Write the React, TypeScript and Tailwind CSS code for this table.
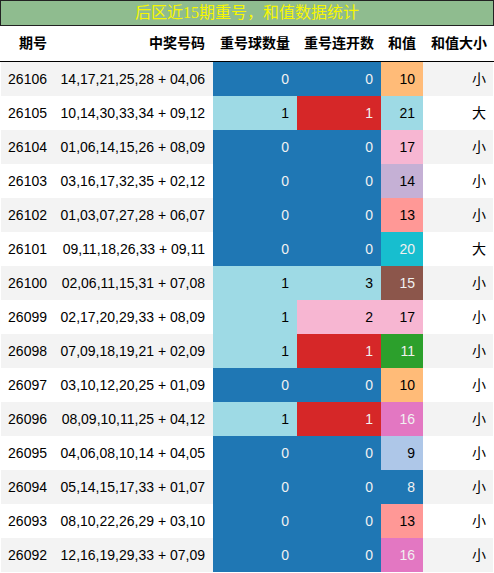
const rows: [string, string, number, number, number, string][] = [
  ['26106', '14,17,21,25,28 + 04,06', 0, 0, 10, '小'],
  ['26105', '10,14,30,33,34 + 09,12', 1, 1, 21, '大'],
  ['26104', '01,06,14,15,26 + 08,09', 0, 0, 17, '小'],
  ['26103', '03,16,17,32,35 + 02,12', 0, 0, 14, '小'],
  ['26102', '01,03,07,27,28 + 06,07', 0, 0, 13, '小'],
  ['26101', '09,11,18,26,33 + 09,11', 0, 0, 20, '大'],
  ['26100', '02,06,11,15,31 + 07,08', 1, 3, 15, '小'],
  ['26099', '02,17,20,29,33 + 08,09', 1, 2, 17, '小'],
  ['26098', '07,09,18,19,21 + 02,09', 1, 1, 11, '小'],
  ['26097', '03,10,12,20,25 + 01,09', 0, 0, 10, '小'],
  ['26096', '08,09,10,11,25 + 04,12', 1, 1, 16, '小'],
  ['26095', '04,06,08,10,14 + 04,05', 0, 0, 9, '小'],
  ['26094', '05,14,15,17,33 + 01,07', 0, 0, 8, '小'],
  ['26093', '08,10,22,26,29 + 03,10', 0, 0, 13, '小'],
  ['26092', '12,16,19,29,33 + 07,09', 0, 0, 16, '小'],
];

const cellColor: Record<number, string> = {
  0: 'bg-[#1f77b4] text-[#f1f1f1]',
  1: 'bg-[#9edae5] text-black',
  2: 'bg-[#f7b6d2] text-black',
  3: 'bg-[#9edae5] text-black',
  8: 'bg-[#1f77b4] text-[#f1f1f1]',
  9: 'bg-[#aec7e8] text-black',
  10: 'bg-[#ffbb78] text-black',
  11: 'bg-[#2ca02c] text-[#f1f1f1]',
  13: 'bg-[#ff9896] text-black',
  14: 'bg-[#c5b0d5] text-black',
  15: 'bg-[#8c564b] text-[#f1f1f1]',
  16: 'bg-[#e377c2] text-[#f1f1f1]',
  17: 'bg-[#f7b6d2] text-black',
  20: 'bg-[#17becf] text-[#f1f1f1]',
  21: 'bg-[#9edae5] text-black',
};

// 重号连开数 uses red for 1
const streakColor: Record<number, string> = {
  0: 'bg-[#1f77b4] text-[#f1f1f1]',
  1: 'bg-[#d62728] text-[#f1f1f1]',
  2: 'bg-[#f7b6d2] text-black',
  3: 'bg-[#9edae5] text-black',
};

const font = { fontFamily: '"Liberation Sans", "Noto Sans CJK SC", sans-serif' };

export default function App() {
  return (
    <div className="w-[494px] bg-white text-[14px] text-black" style={font}>
      {/* Title */}
      <div
        className="h-[26px] border border-[#222] bg-[#8fbc8f] text-center text-[16px] leading-[24px] text-[#f7f700]"
        style={{ fontFamily: '"Liberation Serif", "Noto Sans CJK SC", serif' }}
      >
        后区近15期重号，和值数据统计
      </div>

      {/* Header */}
      <div className="flex h-[36px] items-center border-b border-black pl-px font-bold">
        <div className="w-[54px] pr-2 text-right">期号</div>
        <div className="w-[158px] pr-2 text-right">中奖号码</div>
        <div className="w-[84px] pr-[7px] text-right">重号球数量</div>
        <div className="w-[84px] pr-[7px] text-right">重号连开数</div>
        <div className="w-[42px] pr-[7px] text-right">和值</div>
        <div className="w-[70px] pr-[6px] text-right">和值大小</div>
      </div>

      {/* Rows */}
      <div className="pl-px">
        {rows.map(([no, code, rep, streak, sum, size], i) => (
          <div
            key={no}
            className={`flex h-[34px] w-[492px] items-center ${i % 2 === 0 ? 'bg-[#f3f3f3]' : 'bg-white'}`}
          >
            <div className="w-[54px] pr-2 text-right">{no}</div>
            <div className="w-[158px] pr-2 text-right">{code}</div>
            <div className={`flex h-full w-[84px] items-center justify-end pr-2 ${cellColor[rep]}`}>{rep}</div>
            <div className={`flex h-full w-[84px] items-center justify-end pr-2 ${streakColor[streak]}`}>{streak}</div>
            <div className={`flex h-full w-[42px] items-center justify-end pr-2 ${cellColor[sum]}`}>{sum}</div>
            <div className="w-[70px] pr-[7px] text-right">{size}</div>
          </div>
        ))}
      </div>
    </div>
  );
}
